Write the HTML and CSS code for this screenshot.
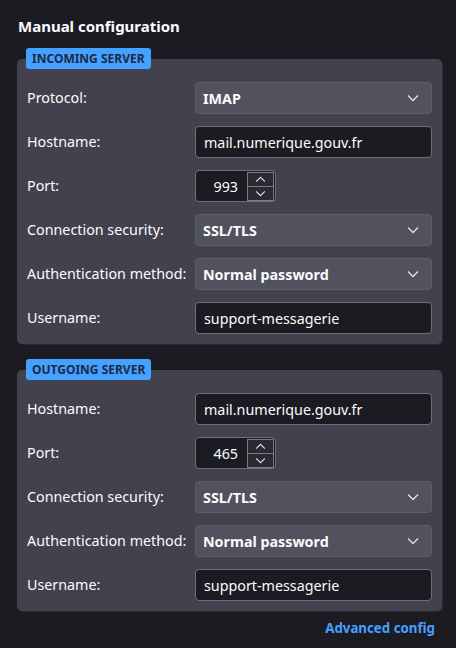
FILE: index.html
```html
<!DOCTYPE html>
<html lang="en">
<head>
<meta charset="utf-8">
<link rel="stylesheet" href="styles.css">
</head>
<body>
<div class="page">
  <h1 class="title">Manual configuration</h1>

  <section class="group">
    <div class="badge">INCOMING SERVER</div>
    <div class="box">
      <div class="label">Protocol:</div>
      <div class="select"><span>IMAP</span><svg class="chev" viewBox="0 0 12 8" width="12" height="8"><path d="M1 1.5 L6 6.5 L11 1.5"/></svg></div>

      <div class="label">Hostname:</div>
      <div class="input">mail.numerique.gouv.fr</div>

      <div class="label">Port:</div>
      <div class="port">
        <span class="num">993</span>
        <span class="spin">
          <span class="sbtn"><svg viewBox="0 0 12 8" width="12" height="8"><path d="M1 6.5 L6 1.5 L11 6.5"/></svg></span>
          <span class="sbtn"><svg viewBox="0 0 12 8" width="12" height="8"><path d="M1 1.5 L6 6.5 L11 1.5"/></svg></span>
        </span>
      </div>

      <div class="label">Connection security:</div>
      <div class="select"><span>SSL/TLS</span><svg class="chev" viewBox="0 0 12 8" width="12" height="8"><path d="M1 1.5 L6 6.5 L11 1.5"/></svg></div>

      <div class="label">Authentication method:</div>
      <div class="select"><span>Normal password</span><svg class="chev" viewBox="0 0 12 8" width="12" height="8"><path d="M1 1.5 L6 6.5 L11 1.5"/></svg></div>

      <div class="label">Username:</div>
      <div class="input">support-messagerie</div>
    </div>
  </section>

  <section class="group second">
    <div class="badge">OUTGOING SERVER</div>
    <div class="box">
      <div class="label">Hostname:</div>
      <div class="input">mail.numerique.gouv.fr</div>

      <div class="label">Port:</div>
      <div class="port">
        <span class="num">465</span>
        <span class="spin">
          <span class="sbtn"><svg viewBox="0 0 12 8" width="12" height="8"><path d="M1 6.5 L6 1.5 L11 6.5"/></svg></span>
          <span class="sbtn"><svg viewBox="0 0 12 8" width="12" height="8"><path d="M1 1.5 L6 6.5 L11 1.5"/></svg></span>
        </span>
      </div>

      <div class="label">Connection security:</div>
      <div class="select"><span>SSL/TLS</span><svg class="chev" viewBox="0 0 12 8" width="12" height="8"><path d="M1 1.5 L6 6.5 L11 1.5"/></svg></div>

      <div class="label">Authentication method:</div>
      <div class="select"><span>Normal password</span><svg class="chev" viewBox="0 0 12 8" width="12" height="8"><path d="M1 1.5 L6 6.5 L11 1.5"/></svg></div>

      <div class="label">Username:</div>
      <div class="input">support-messagerie</div>
    </div>
  </section>

  <div class="footer"><a class="link" href="#">Advanced config</a></div>
</div>
</body>
</html>
```
FILE: styles.css
```css
html, body {
  margin: 0;
  padding: 0;
  background: #1c1b22;
}
body {
  font-family: "Noto Sans", "Open Sans", sans-serif;
  color: #fbfbfe;
  width: 456px;
  height: 648px;
  overflow: hidden;
}
.page {
  padding: 16px 14px 0 17px;
}
.title {
  margin: 0 0 12px 1px;
  font-size: 15px;
  line-height: 20px;
  font-weight: 700;
}
.group {
  display: flex;
  flex-direction: column;
}
.group.second {
  margin-top: 15px;
}
.badge {
  position: relative;
  z-index: 1;
  align-self: flex-start;
  margin-left: 9px;
  margin-bottom: -10px;
  height: 21px;
  line-height: 21px;
  padding: 0 6px;
  background: #45a1ff;
  color: #1c2a45;
  font-size: 12px;
  font-weight: 700;
  border-radius: 3px;
}
.box {
  background: #42414d;
  border-radius: 5px;
  box-shadow: 1px 1px 0 #2b2a33;
  padding: 23px 10px 10px 10px;
  display: grid;
  grid-template-columns: 168px 1fr;
  grid-auto-rows: 32px;
  row-gap: 12px;
  align-items: center;
}
.label {
  font-size: 14.3px;
  line-height: 20px;
}
.select {
  box-sizing: border-box;
  height: 32px;
  background: #52525e;
  border: 1px solid #5d5c68;
  border-radius: 4px;
  display: flex;
  align-items: center;
  justify-content: space-between;
  padding: 0 12px 0 7px;
  font-size: 14.3px;
  font-weight: 700;
}
.chev path, .sbtn path {
  fill: none;
  stroke: #e0e0e6;
  stroke-width: 1.3;
}
.input {
  box-sizing: border-box;
  height: 32px;
  background: #1c1b22;
  border: 1px solid #6f6e79;
  border-radius: 4px;
  display: flex;
  align-items: center;
  padding: 0 8px;
  font-size: 14.3px;
}
.port {
  box-sizing: border-box;
  width: 81px;
  height: 32px;
  background: #1c1b22;
  border: 1px solid #6f6e79;
  border-radius: 4px;
  display: flex;
  align-items: center;
  font-size: 14.3px;
}
.num {
  width: 42px;
  text-align: right;
}
.spin {
  margin-left: 9px;
  display: flex;
  flex-direction: column;
}
.sbtn {
  box-sizing: border-box;
  width: 27px;
  height: 15px;
  border: 1px solid #7a7984;
  background: #2b2a33;
  display: flex;
  align-items: center;
  justify-content: center;
}
.sbtn + .sbtn {
  margin-top: -1px;
}
.sbtn svg {
  width: 11px;
  height: 7px;
}
.footer {
  margin-top: 7px;
  padding-right: 7px;
  display: flex;
  justify-content: flex-end;
}
.link {
  color: #45a1ff;
  font-weight: 700;
  font-size: 13.3px;
  line-height: 20px;
  text-decoration: none;
}
```
